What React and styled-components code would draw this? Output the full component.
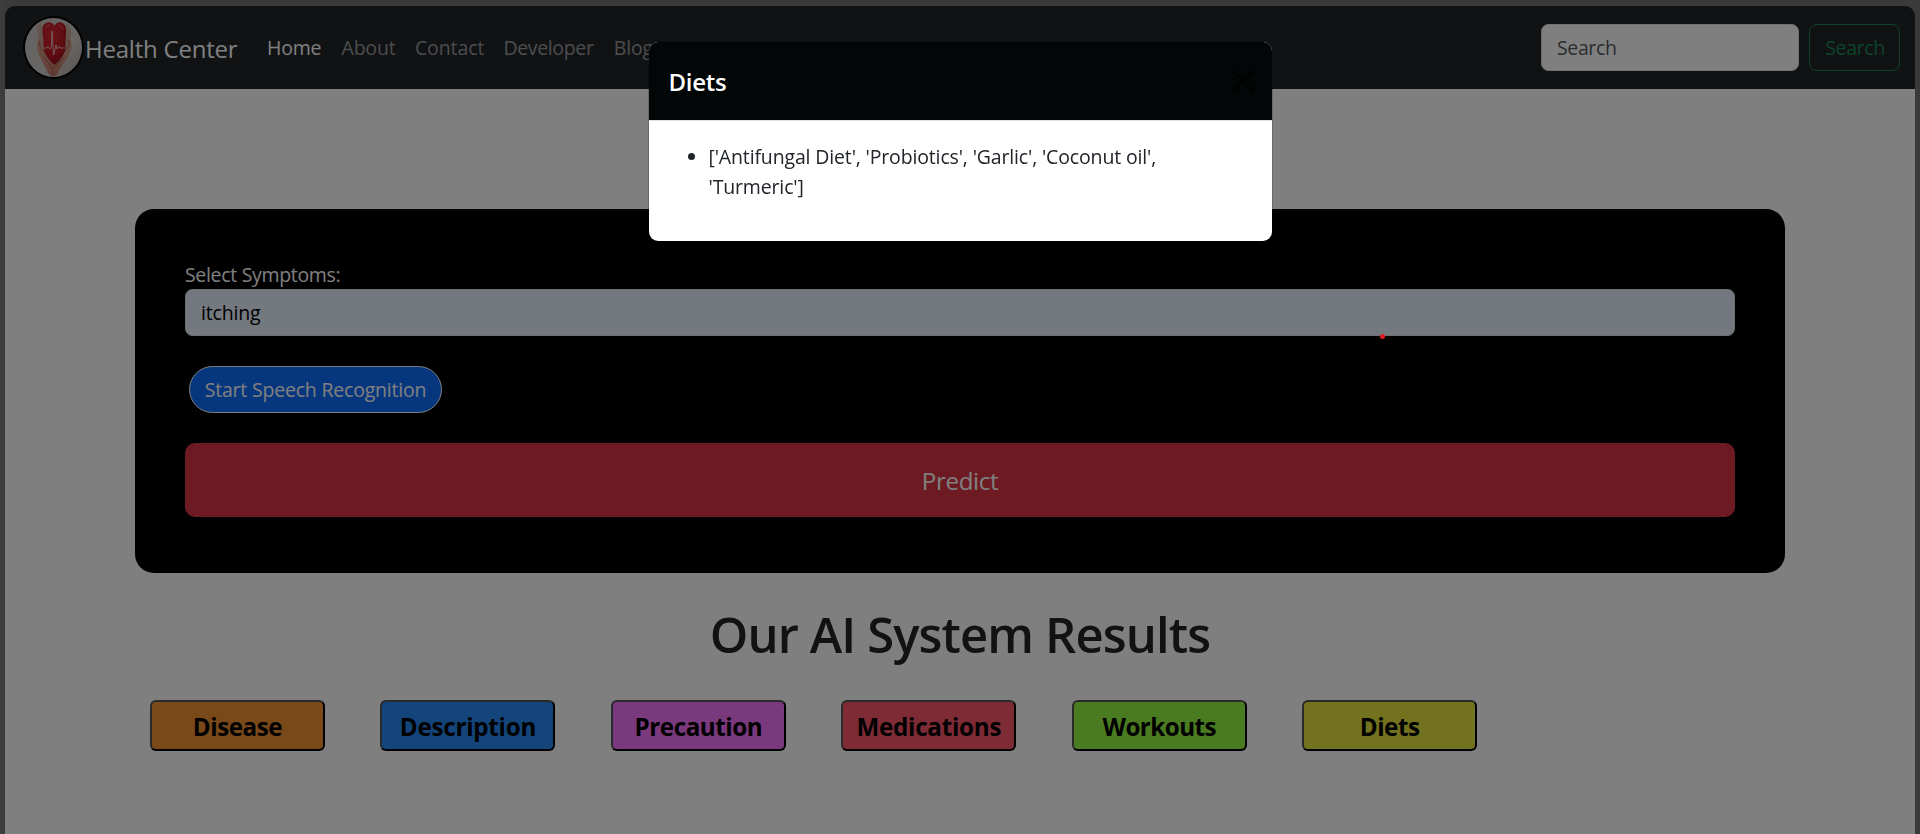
import React from "react";
import styled, { createGlobalStyle } from "styled-components";

const GlobalStyle = createGlobalStyle`
  *, *::before, *::after { box-sizing: border-box; }
  html, body { margin: 0; height: 834px; overflow: hidden; }
  body {
    background: #747474;
    color: #212529;
    font-family: "Open Sans", "Noto Sans", sans-serif;
    font-size: 19.5px;
    line-height: 30px;
  }
  button, input { font: inherit; letter-spacing: inherit; }
`;

const Page = styled.div`
  height: 834px;
  padding: 6px 5px 0;
  display: flex;
  flex-direction: column;
  background: linear-gradient(90deg, #7c7c7c, #747474 8px, #747474);
`;

const Navbar = styled.nav`
  flex: none;
  height: 83px;
  padding: 0 15px 0 18px;
  display: flex;
  align-items: center;
  background: #212529;
  border-radius: 10px 10px 0 0;
`;

const Avatar = styled.svg`
  flex: none;
  width: 61px;
  height: 63px;
  border: 2px solid #000;
  border-radius: 50%;
`;

const Brand = styled.a`
  width: 173px;
  padding: 2px 0 0 1px;
  color: #fff;
  font-size: 24px;
  letter-spacing: -0.22px;
  white-space: nowrap;
`;

const NavList = styled.ul`
  display: flex;
  flex: 1;
  margin: 0;
  padding: 0;
  list-style: none;
`;

const NavItem = styled.li`
  width: ${(p) => p.$width}px;
  padding: 1px 10px 0;
  color: ${(p) => (p.$active ? "#fff" : "rgba(255,255,255,.55)")};
  letter-spacing: ${(p) => p.$spacing}px;
  white-space: nowrap;
`;

const SearchForm = styled.form`
  display: flex;
  gap: 10px;
  letter-spacing: -0.38px;
`;

const SearchInput = styled.input`
  width: 258px;
  height: 47px;
  padding: 0 15px;
  border: 1px solid #dee2e6;
  border-radius: 7.5px;
  background: #fff;
  &::placeholder { color: #565a5f; opacity: 1; }
`;

const SearchButton = styled.button`
  width: 91px;
  height: 47px;
  padding: 1px 0 0 1px;
  border: 1px solid #198754;
  border-radius: 7.5px;
  background: transparent;
  color: #198754;
`;

const Main = styled.main`
  flex: 1;
  padding: 120px 130px 0;
  background: #fff;
`;

const SymptomCard = styled.form`
  height: 364px;
  padding: 50px 50px 0;
  display: flex;
  flex-direction: column;
  align-items: flex-start;
  border-radius: 19px;
  background: #000;
`;

const Label = styled.label`
  height: 30px;
  padding-top: 1px;
  color: #fff;
  letter-spacing: -0.32px;
`;

const SymptomInput = styled.input`
  width: 100%;
  height: 47px;
  padding: 0 15px;
  border: 1px solid #dee2e6;
  border-radius: 7.5px;
  background: #e8f0fe;
  color: #000;
  letter-spacing: -0.18px;
`;

const SpeechButton = styled.button`
  width: 253px;
  height: 47px;
  margin: 30px 0 30px 4px;
  padding: 1px 0 0;
  border: 1px solid #fff;
  border-radius: 24px;
  background: #0d6efd;
  color: #fff;
  letter-spacing: -0.2px;
`;

const PredictButton = styled.button`
  width: 100%;
  height: 74px;
  padding: 2px 0 0;
  border: 0;
  border-radius: 10px;
  background: #dc3545;
  color: #fff;
  font-size: 24.2px;
  letter-spacing: -0.4px;
`;

const Heading = styled.h1`
  margin: 31px 0 0;
  font-size: 49px;
  font-weight: 580;
  line-height: 60px;
  letter-spacing: -0.9px;
  text-align: center;
`;

const Results = styled.div`
  display: flex;
  gap: 55.45px;
  padding: 36px 0 0 15px;
`;

const ResultButton = styled.button`
  width: 175px;
  height: 51px;
  padding: 2px 0 0;
  border: 2px solid;
  border-color: #545454 #000 #000 #545454;
  border-radius: 6px;
  background: ${(p) => p.$color};
  color: #000;
  font-size: 24.2px;
  font-weight: 700;
  letter-spacing: ${(p) => p.$spacing}px;
`;

const Backdrop = styled.div`
  position: fixed;
  inset: 0;
  display: flex;
  justify-content: center;
  align-items: flex-start;
  padding-top: 41px;
  background: rgba(0, 0, 0, 0.5);
`;

const Dialog = styled.section`
  width: 625px;
  height: 201px;
  border: 1px solid rgba(0, 0, 0, 0.175);
  border-radius: 10px;
  background: #fff;
  background-clip: padding-box;
  overflow: hidden;
`;

const DialogHeader = styled.header`
  height: 79px;
  padding: 0 18px 0 20px;
  display: flex;
  align-items: center;
  justify-content: space-between;
  border-bottom: 1px solid #dee2e6;
  background: #020606;
`;

const DialogTitle = styled.h5`
  margin: 0;
  padding-top: 1px;
  color: #fff;
  font-size: 24px;
  font-weight: 650;
  letter-spacing: -0.3px;
`;

const CloseIcon = styled.svg`
  width: 22px;
  height: 22px;
`;

const DietList = styled.ul`
  margin: 0;
  padding: 21px 60px 20px;
  letter-spacing: -0.15px;
`;

const Pointer = styled.i`
  position: fixed;
  left: 1380px;
  top: 334px;
  width: 5px;
  height: 5px;
  border-radius: 50%;
  background: #e01b24;
`;

const NAV = [
  { text: "Home", width: 74.5, spacing: -0.22, active: true },
  { text: "About", width: 73.4, spacing: -0.2 },
  { text: "Contact", width: 88.5, spacing: -0.1 },
  { text: "Developer", width: 110.4, spacing: -0.35 },
  { text: "Blog", width: 60, spacing: -0.2 },
];

const RESULTS = [
  { text: "Disease", color: "#f49232", spacing: -0.45 },
  { text: "Description", color: "#288af4", spacing: -0.25 },
  { text: "Precaution", color: "#f470fa", spacing: -0.45 },
  { text: "Medications", color: "#fc566c", spacing: -0.25 },
  { text: "Workouts", color: "#96f640", spacing: -0.55 },
  { text: "Diets", color: "#e6e43e", spacing: -0.4 },
];

function HeartAvatar() {
  return (
    <Avatar viewBox="0 0 57 59" preserveAspectRatio="none" aria-hidden="true">
      <defs>
        <linearGradient id="paper" x1="0" y1="0" x2="1" y2="1">
          <stop offset="0" stopColor="#c9c5c1" />
          <stop offset=".6" stopColor="#d2cecb" />
          <stop offset="1" stopColor="#aea6a1" />
        </linearGradient>
        <linearGradient id="skin" x1="0" y1="0" x2="0" y2="1">
          <stop offset="0" stopColor="#c9b3a8" />
          <stop offset=".5" stopColor="#cf9a86" />
          <stop offset="1" stopColor="#c67766" />
        </linearGradient>
        <radialGradient id="heart" cx=".4" cy=".3" r=".8">
          <stop offset="0" stopColor="#d82a34" />
          <stop offset=".6" stopColor="#c01822" />
          <stop offset="1" stopColor="#820b14" />
        </radialGradient>
      </defs>
      <rect width="57" height="59" fill="url(#paper)" />
      <path d="M13 3C10 9 13 16 14 21C11 25 11 31 14 36C16 43 21 49 23 55L28 59L33 56C34 49 42 43 44 36C48 30 47 25 45 20C48 16 46 11 43 5L38 8L40 27L30 45L20 29L17 6Z" fill="url(#skin)" />
      <path d="M15 23C13 28 17 32 21 36M43 22C47 28 40 32 37 36M19 39L28 51L39 39M28 51L27 57" fill="none" stroke="#a3604f" strokeWidth="1" />
      <path d="M29.500 8C27 2.500 18 3 17.500 11C17 16 19 22 18.500 28C18 34 24 43 29.500 47C35 43 41.500 34 40.500 28C40 22 41.500 16 41 11C40 3 32 2.500 29.500 8Z" fill="url(#heart)" />
      <path d="M20.500 10Q22 6 25 7M33 7Q37 7 38 12" fill="none" stroke="#e2656b" strokeWidth="1" />
      <path d="M18 30H22L23 28.500L25 31L26.500 29L27 13L28.500 37L31 27L32 31L34 28.500L35 30H40" fill="none" stroke="#edd4d4" strokeWidth=".8" />
    </Avatar>
  );
}

export default function App() {
  return (
    <>
      <GlobalStyle />
      <Page>
        <Navbar>
          <HeartAvatar />
          <Brand>Health Center</Brand>
          <NavList>
            {NAV.map((n) => (
              <NavItem key={n.text} $width={n.width} $spacing={n.spacing} $active={n.active}>
                {n.text}
              </NavItem>
            ))}
          </NavList>
          <SearchForm>
            <SearchInput placeholder="Search" />
            <SearchButton type="button">Search</SearchButton>
          </SearchForm>
        </Navbar>
        <Main>
          <SymptomCard>
            <Label htmlFor="symptoms">Select Symptoms:</Label>
            <SymptomInput id="symptoms" defaultValue="itching" />
            <SpeechButton type="button">Start Speech Recognition</SpeechButton>
            <PredictButton type="button">Predict</PredictButton>
          </SymptomCard>
          <Heading>Our AI System Results</Heading>
          <Results>
            {RESULTS.map((r) => (
              <ResultButton key={r.text} $color={r.color} $spacing={r.spacing}>
                {r.text}
              </ResultButton>
            ))}
          </Results>
        </Main>
      </Page>
      <Backdrop>
        <Dialog role="dialog">
          <DialogHeader>
            <DialogTitle>Diets</DialogTitle>
            <CloseIcon viewBox="0 0 22 22" aria-label="Close">
              <path d="M1.500 1.500L20.500 20.500M20.500 1.500L1.500 20.500" stroke="#000202" strokeWidth="2" strokeLinecap="round" />
            </CloseIcon>
          </DialogHeader>
          <DietList>
            <li>['Antifungal Diet', 'Probiotics', 'Garlic', 'Coconut oil', 'Turmeric']</li>
          </DietList>
        </Dialog>
      </Backdrop>
      <Pointer />
    </>
  );
}
